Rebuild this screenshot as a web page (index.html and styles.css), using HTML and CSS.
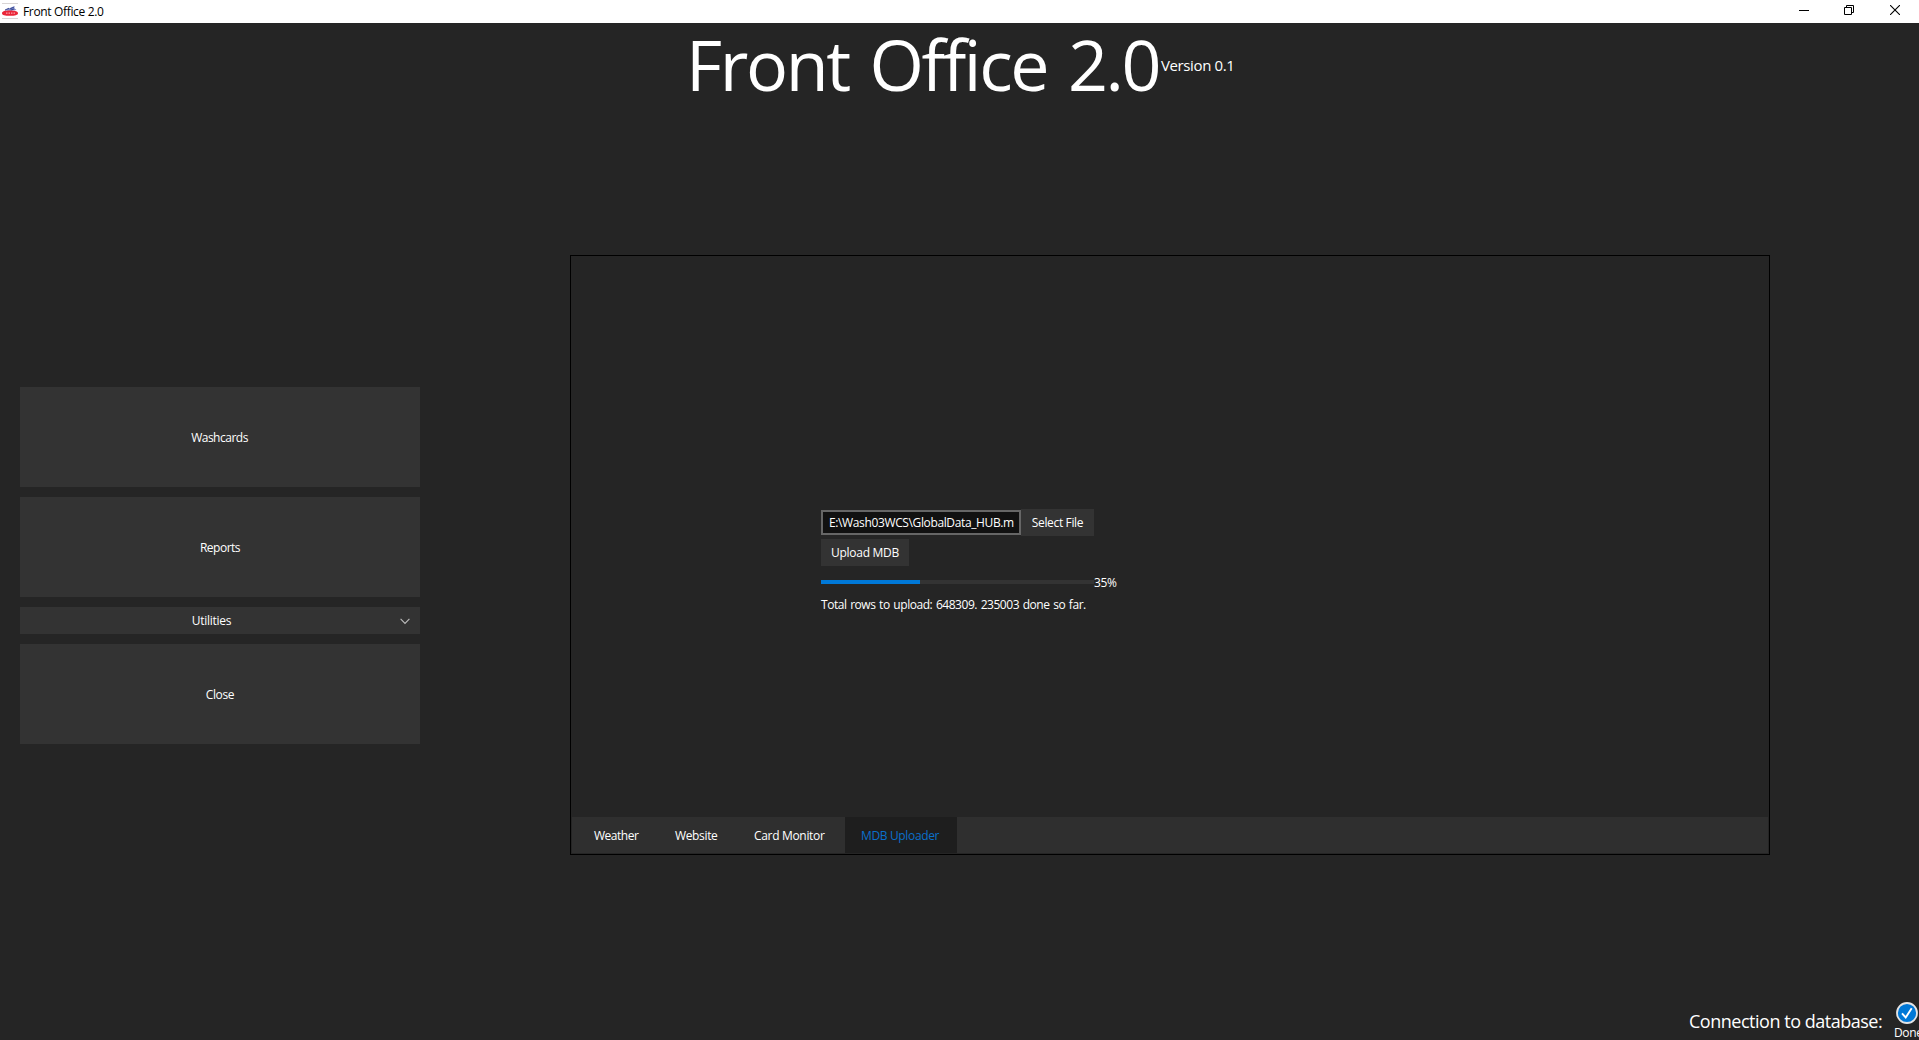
FILE: index.html
```html
<!DOCTYPE html>
<html lang="en">
<head>
<meta charset="utf-8">
<title>Front Office 2.0</title>
<link rel="stylesheet" href="styles.css">
</head>
<body>
<div class="window">
  <header class="titlebar">
    <svg class="app-icon" width="16" height="16" viewBox="0 0 16 16">
      <path d="M0 .5h16M0 15.500h16" stroke="#d9d5d5"/>
      <path d="M2.500 7.500 6 5.500 8 5l2-1 3-.8-.8 1.800 2.300 2-6 .8z" fill="#7d88c4"/>
      <path d="M3 7l4-1.800M8 6l4-2M9 7l3-1" stroke="#30418f" stroke-width=".9"/>
      <path d="M0 10.200C0 8.300 3 7.600 8 7.600s8 .8 8 2.600-3 2.600-8 2.600-8-.6-8-2.600z" fill="#ea2638"/>
      <path d="M4 10.200h9" stroke="#f9a3aa" stroke-width="1.200" stroke-dasharray="1.500 1"/>
    </svg>
    <span class="caption">Front Office 2.0</span>
    <div class="controls">
      <svg width="10" height="10" viewBox="0 0 10 10"><path d="M0 5.500h10" stroke="#000"/></svg>
      <svg width="10" height="10" viewBox="0 0 10 10" fill="none" stroke="#000"><path d="M.5 2.500h7v7h-7zM2.500 2.500v-2h7v7h-2"/></svg>
      <svg width="10" height="10" viewBox="0 0 10 10"><path d="M0 0l10 10M10 0 0 10" stroke="#000" stroke-width="1.100"/></svg>
    </div>
  </header>

  <div class="heading">
    <h1 class="title">Front Office 2.0</h1>
    <span class="version">Version 0.1</span>
  </div>

  <div class="main">
    <nav class="menu">
      <button class="btn big washcards">Washcards</button>
      <button class="btn big reports">Reports</button>
      <button class="btn split">
        <span class="split-label">Utilities</span>
        <svg width="10" height="7" viewBox="0 0 10 7"><path d="M.6 .8 5 5.400 9.400 .8" fill="none" stroke="#bdbdbd" stroke-width="1.100"/></svg>
      </button>
      <button class="btn big close">Close</button>
    </nav>

    <section class="panel">
      <div class="page">
        <div class="row">
          <div class="file-input">E:\Wash03WCS\GlobalData_HUB.m</div>
          <button class="btn select">Select File</button>
        </div>
        <button class="btn upload">Upload MDB</button>
        <div class="row progress">
          <div class="track"><div class="fill"></div></div>
          <span class="percent">35%</span>
        </div>
        <p class="status">Total rows to upload: 648309. 235003 done so far.</p>
      </div>
      <div class="tabs">
        <div class="tab weather">Weather</div>
        <div class="tab website">Website</div>
        <div class="tab monitor">Card Monitor</div>
        <div class="tab uploader active">MDB Uploader</div>
      </div>
    </section>
  </div>

  <footer class="footer">
    <span class="connection">Connection to database:</span>
    <div class="state">
      <svg width="22" height="22" viewBox="0 0 22 22">
        <circle cx="11" cy="11" r="10" fill="#0078d7" stroke="#e4e4e4" stroke-width="1.800"/>
        <path d="M6 11.300 9.700 15.500 15.700 6.300" fill="none" stroke="#fff" stroke-width="1.900"/>
      </svg>
      <span class="done">Done</span>
    </div>
  </footer>
</div>
</body>
</html>
```
FILE: styles.css
```css
* { box-sizing: border-box; margin: 0; padding: 0; }

body {
  background: #252525;
  color: #fff;
  font: 12px/18px "Open Sans", "Noto Sans", sans-serif;
  letter-spacing: -0.35px;
  white-space: nowrap;
}

svg { display: block; flex: none; }

.window {
  width: 1919px;
  height: 1040px;
  overflow: hidden;
  display: flex;
  flex-direction: column;
}

.titlebar {
  height: 23px;
  flex: none;
  background: #fff;
  color: #000;
  display: flex;
  align-items: flex-start;
  padding-left: 2px;
}
.app-icon { margin-top: 3px; }
.caption { margin-left: 5px; line-height: 23px; letter-spacing: -0.34px; }
.controls { margin: 5px 19px 0 auto; display: flex; gap: 36px; }
.controls svg:first-child { margin-right: -1px; }

.heading {
  height: 84px;
  flex: none;
  padding-left: 686px;
  display: flex;
  align-items: flex-start;
}
.title {
  width: 475px;
  font-size: 70px;
  font-weight: 400;
  line-height: 82px;
  letter-spacing: -2.4px;
  word-spacing: 5px;
}
.version { font-size: 15px; line-height: 84px; letter-spacing: -0.38px; }

.main {
  flex: 1;
  display: flex;
  align-items: flex-start;
  padding: 148px 0 0 20px;
}

.menu {
  width: 400px;
  margin: 132px 150px 0 0;
  display: flex;
  flex-direction: column;
  gap: 10px;
}

.btn {
  border: 0;
  background: #333;
  color: #fff;
  font: inherit;
  letter-spacing: inherit;
  height: 27px;
}
.big { height: 100px; padding-top: 2px; }
.washcards, .reports { letter-spacing: -0.5px; }
.washcards { padding-right: 1px; }
.split {
  display: flex;
  align-items: center;
  padding: 0 10px 0 0;
  letter-spacing: -0.28px;
}
.split-label { flex: 1; text-align: center; padding-left: 3px; }
.split svg { margin-top: 1px; }

.panel {
  width: 1200px;
  height: 600px;
  border: 1px solid #000;
  padding: 0 1px 1px;
  display: flex;
  flex-direction: column;
}
.page {
  flex: 1;
  padding: 253px 0 0 249px;
  display: flex;
  flex-direction: column;
  align-items: flex-start;
}
.row { display: flex; align-items: center; }
.file-input {
  width: 200px;
  height: 25px;
  padding-left: 6px;
  border: 2px solid #666;
  background: #111;
  line-height: 21px;
  letter-spacing: -0.37px;
  overflow: hidden;
}
.select { width: 73px; }
.upload { width: 88px; margin-top: 3px; letter-spacing: -0.28px; }
.progress { margin-top: 7px; height: 18px; }
.track { width: 273px; height: 4px; background: #333; }
.fill { width: 99px; height: 4px; background: #0078d7; }
.percent { line-height: 18px; padding-top: 2px; }
.status { margin-top: 5px; letter-spacing: -0.46px; word-spacing: 1px; }

.tabs { height: 36px; background: #2f2f2f; display: flex; line-height: 38px; }
.tab { height: 36px; padding-left: 16px; }
.weather { width: 87px; padding-left: 22px; letter-spacing: -0.48px; }
.website { width: 79px; }
.monitor { width: 107px; letter-spacing: -0.32px; }
.uploader { width: 112px; padding-left: 16px; }
.active { background: #1e1e1e; color: #0a70cb; }

.footer {
  height: 40px;
  flex: none;
  display: flex;
  align-items: flex-start;
  padding-left: 1689px;
}
.connection {
  width: 205px;
  flex: none;
  font-size: 18px;
  line-height: 24px;
  letter-spacing: -0.48px;
  padding-top: 9px;
}
.state { flex: none; padding-top: 2px; }
.state svg { margin-left: 2px; }
.done { display: block; line-height: 18px; }
```
